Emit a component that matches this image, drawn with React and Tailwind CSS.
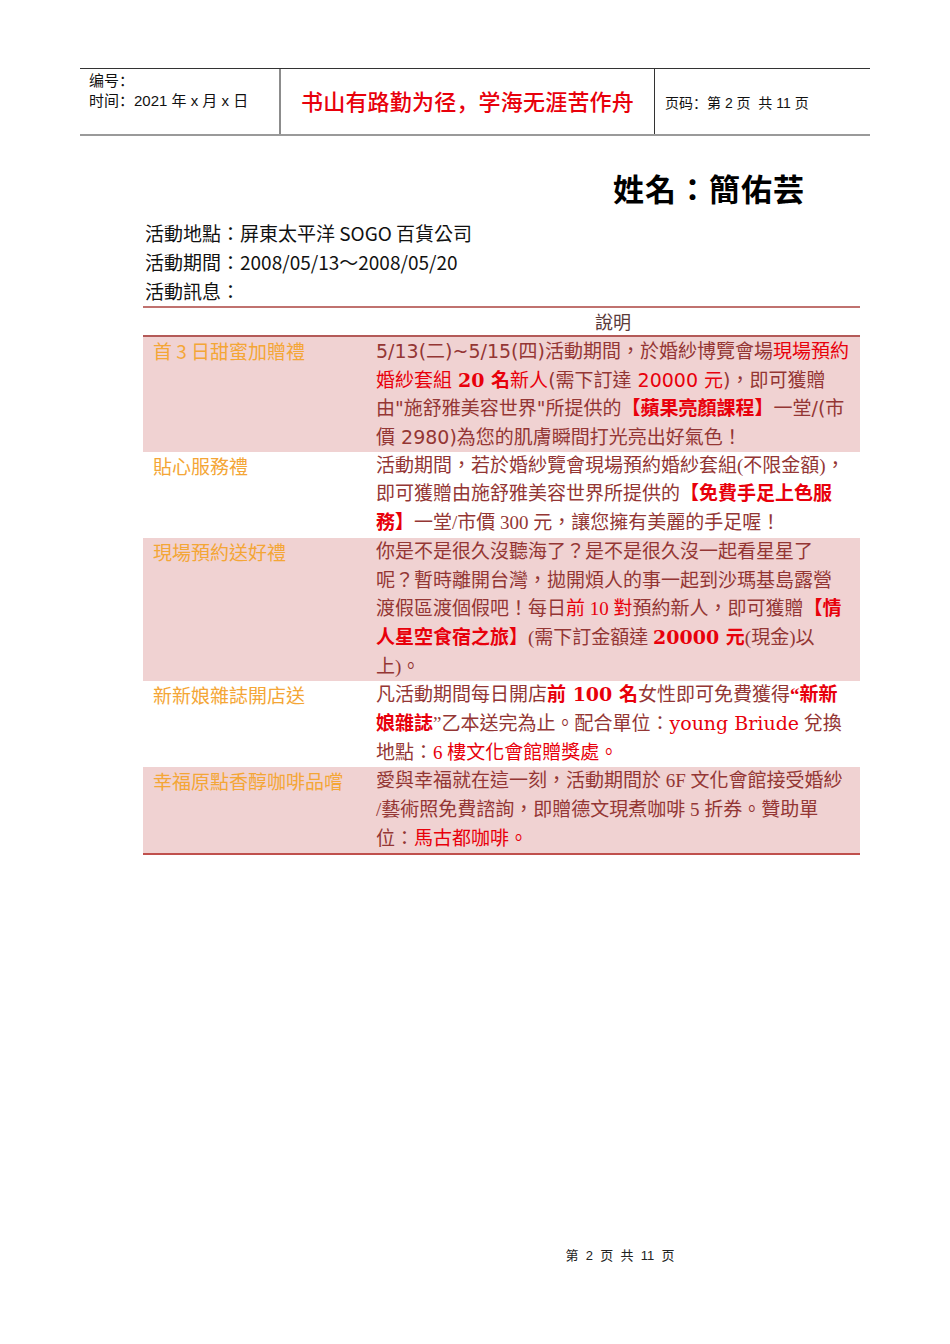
const R = ({ children, b }) => (
  <span className={b ? "font-bold text-[#e8000b]" : "text-[#e8000b]"}>{children}</span>
);

const DV = ({ children }) => (
  <span className="leading-none font-['DejaVu_Serif','Noto_Sans_CJK_TC',serif]">{children}</span>
);

const rows = [
  {
    label: "首 3 日甜蜜加贈禮",
    pink: true,
    sans: true,
    lines: [
      <>5/13(二)~5/15(四)活動期間，於婚紗博覽會場<R>現場預約</R></>,
      <><R>婚紗套組 </R><DV><R b>20 名</R></DV><R>新人</R>(需下訂達 <R>20000 元</R>)，即可獲贈</>,
      <>由"施舒雅美容世界"所提供的<R b>【蘋果亮顏課程】</R>一堂/(市</>,
      <>價 2980)為您的肌膚瞬間打光亮出好氣色！</>,
    ],
  },
  {
    label: "貼心服務禮",
    lines: [
      <>活動期間，若於婚紗覽會現場預約婚紗套組(不限金額)，</>,
      <>即可獲贈由施舒雅美容世界所提供的<R b>【免費手足上色服</R></>,
      <><R b>務】</R>一堂/市價 300 元，讓您擁有美麗的手足喔！</>,
    ],
  },
  {
    label: "現場預約送好禮",
    pink: true,
    lines: [
      <>你是不是很久沒聽海了？是不是很久沒一起看星星了</>,
      <>呢？暫時離開台灣，拋開煩人的事一起到沙瑪基島露營</>,
      <>渡假區渡個假吧！每日<R>前 10 對</R>預約新人，即可獲贈<R b>【情</R></>,
      <><R b>人星空食宿之旅】</R>(需下訂金額達 <DV><R b>20000 元</R></DV>(現金)以</>,
      <>上)。</>,
    ],
  },
  {
    label: "新新娘雜誌開店送",
    lines: [
      <>凡活動期間每日開店<DV><R b>前 100 名</R></DV>女性即可免費獲得<R b>“新新</R></>,
      <><R b>娘雜誌</R>”乙本送完為止。配合單位：<DV><R>young Briude</R></DV> 兌換</>,
      <>地點：<R>6 樓文化會館贈獎處。</R></>,
    ],
  },
  {
    label: "幸福原點香醇咖啡品嚐",
    pink: true,
    lines: [
      <>愛與幸福就在這一刻，活動期間於 6F 文化會館接受婚紗</>,
      <>/藝術照免費諮詢，即贈德文現煮咖啡 5 折券。贊助單</>,
      <>位：<R>馬古都咖啡。</R></>,
    ],
  },
];

export default function App() {
  return (
    <div className="w-[950px] h-[1344px] bg-white flex flex-col font-['Noto_Sans_CJK_TC',sans-serif]">
      {/* page header */}
      <div className="mt-[68px] mx-[80px] h-[68px] flex border-t border-[#333] border-b-2 border-b-[#9a9a9a] font-['Liberation_Sans','Noto_Sans_CJK_SC',sans-serif]">
        <div className="w-[201px] pl-[9px] pt-[2px] text-[15px] leading-[20px] text-[#111] border-r-2 border-[#8c8c8c]">
          <div>编号：</div>
          <div>时间：2021 年 x 月 x 日</div>
        </div>
        <div className="w-[373px] flex items-center justify-center pt-[2px] text-[22px] font-medium text-[#e8000b] tracking-[0.2px]">
          书山有路勤为径，学海无涯苦作舟
        </div>
        <div className="flex-1 flex items-center pl-[10px] pt-[4px] text-[14px] text-[#111] border-l border-[#333]">
          页码：第 2 页&nbsp; 共 11 页
        </div>
      </div>

      <div className="mt-[32px] pr-[145px] flex justify-end text-[31px] leading-[40px] font-bold text-black tracking-[1px]">
        姓名：簡佑芸
      </div>

      <div className="mt-[10px] ml-[145px] text-[19px] leading-[29px] text-[#111]">
        <div>活動地點：屏東太平洋 SOGO 百貨公司</div>
        <div>活動期間：2008/05/13～2008/05/20</div>
        <div>活動訊息：</div>
      </div>

      <div className="mt-[1px] ml-[143px] w-[717px] border-t-2 border-[#c0726f] border-b-2 border-b-[#c0504d]">
        <div className="flex h-[29px] border-b-2 border-[#b45a58] text-[18px] text-[#5a3a3a]">
          <div className="w-[223px]" />
          <div className="flex-1 flex items-center justify-center">說明</div>
        </div>
        {rows.map((row, i) => (
          <div key={i} className={"flex text-[19px] leading-[28.7px] " + (row.pink ? "bg-[#f0d2d2]" : "bg-white")}>
            <div className="w-[223px] pl-[10px] text-[#f4a636] whitespace-nowrap">{row.label}</div>
            <div
              className={
                "flex-1 pl-[10px] text-[#943634] whitespace-nowrap " +
                (row.sans
                  ? "font-['DejaVu_Sans','Noto_Sans_CJK_TC',sans-serif]"
                  : "font-['Liberation_Serif','Noto_Sans_CJK_TC',serif]")
              }
            >
              {row.lines.map((line, j) => (
                <div key={j} className="h-[28.7px]">{line}</div>
              ))}
            </div>
          </div>
        ))}
      </div>

      <div className="mt-auto mb-[78px] pl-[290px] flex justify-center text-[13px] leading-[20px] text-[#222] font-['Liberation_Sans','Noto_Sans_CJK_SC',sans-serif]">
        第&nbsp; 2&nbsp; 页&nbsp; 共&nbsp; 11&nbsp; 页
      </div>
    </div>
  );
}
